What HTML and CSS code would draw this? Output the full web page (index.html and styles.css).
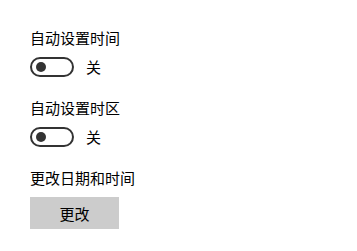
FILE: index.html
```html
<!DOCTYPE html>
<html lang="zh-CN">
<head>
<meta charset="utf-8">
<link rel="stylesheet" href="styles.css">
</head>
<body>
<div class="page">
  <section class="group">
    <div class="label">自动设置时间</div>
    <div class="toggle-row">
      <span class="toggle"><span class="knob"></span></span>
      <span class="state">关</span>
    </div>
  </section>
  <section class="group">
    <div class="label">自动设置时区</div>
    <div class="toggle-row">
      <span class="toggle"><span class="knob"></span></span>
      <span class="state">关</span>
    </div>
  </section>
  <section class="group">
    <div class="label">更改日期和时间</div>
    <button class="btn">更改</button>
  </section>
</div>
</body>
</html>
```
FILE: styles.css
```css
html, body {
  margin: 0;
  padding: 0;
  background: #fff;
}
body {
  font-family: "Noto Sans CJK SC", "Noto Sans", sans-serif;
  font-size: 15px;
  color: #000;
}
.page {
  padding: 28px 0 0 30px;
  display: flex;
  flex-direction: column;
  gap: 21px;
}
.group {
  display: flex;
  flex-direction: column;
  align-items: flex-start;
  gap: 9px;
}
.label {
  line-height: 20px;
  height: 20px;
}
.toggle-row {
  display: flex;
  align-items: center;
  gap: 12px;
  height: 20px;
}
.toggle {
  box-sizing: border-box;
  width: 44px;
  height: 20px;
  border: 2px solid #333;
  border-radius: 10px;
  display: flex;
  align-items: center;
  padding-left: 4px;
}
.knob {
  width: 10px;
  height: 10px;
  border-radius: 50%;
  background: #333;
}
.state {
  line-height: 20px;
}
.btn {
  width: 89px;
  height: 32px;
  border: none;
  background: #ccc;
  font-family: inherit;
  font-size: 15px;
  color: #000;
  padding: 0;
  margin: 0;
}
```
